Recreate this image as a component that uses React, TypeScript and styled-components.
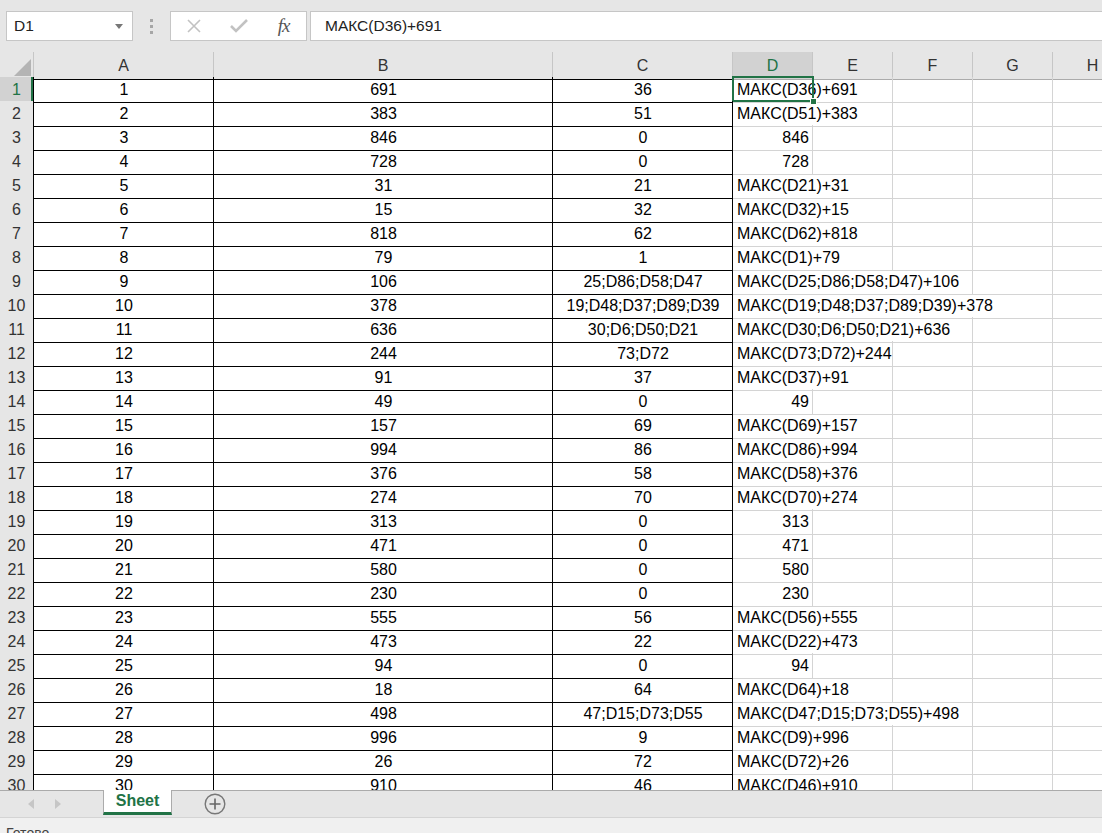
import React from 'react';
import styled, { createGlobalStyle } from 'styled-components';

const GREEN = '#217346';
const GRID = '34px 180px 339px 180px repeat(5, 80px)';

const GlobalStyle = createGlobalStyle`
  html, body {
    margin: 0;
    padding: 0;
    background: #e6e6e6;
  }
  body {
    font-family: "Liberation Sans", Arial, sans-serif;
  }
  * {
    box-sizing: border-box;
  }
`;

const Window = styled.div`
  height: 833px;
  display: flex;
  flex-direction: column;
  overflow: hidden;
  background: #e6e6e6;
`;

/* ---------- formula bar ---------- */

const FormulaBar = styled.div`
  height: 52px;
  flex: none;
  display: flex;
  align-items: flex-start;
  padding: 11px 0 0 6px;
`;

const NameBox = styled.div`
  width: 127px;
  height: 30px;
  background: #fff;
  border: 1px solid #c6c6c6;
  display: flex;
  align-items: center;
  justify-content: space-between;
  padding: 0 9px 0 7px;
  font-size: 15.5px;
  color: #222;
`;

const Grip = styled.div`
  width: 37px;
  height: 30px;
  display: flex;
  flex-direction: column;
  align-items: center;
  justify-content: center;
  gap: 3px;

  span {
    width: 3px;
    height: 3px;
    background: #a6a6a6;
  }
`;

const ButtonBox = styled.div`
  width: 137px;
  height: 30px;
  background: #fff;
  border: 1px solid #c6c6c6;
  display: grid;
  grid-template-columns: repeat(3, 45px);
  align-items: center;
  justify-items: center;
`;

const Fx = styled.span`
  font-family: "Liberation Serif", "Times New Roman", serif;
  font-style: italic;
  font-size: 19px;
  color: #555;
  letter-spacing: -1px;
`;

const FormulaInput = styled.div`
  flex: 1;
  height: 30px;
  margin: 0 -2px 0 3px;
  background: #fff;
  border: 1px solid #c6c6c6;
  display: flex;
  align-items: center;
  padding-left: 14px;
  font-size: 15.5px;
  color: #222;
`;

/* ---------- sheet grid ---------- */

const Sheet = styled.div`
  flex: 1;
  min-height: 0;
  overflow: hidden;
  background: #fff;
`;

const Row = styled.div<{ $height: number }>`
  display: grid;
  grid-template-columns: ${GRID};
  width: 1133px;
  height: ${(p) => p.$height}px;
`;

const Corner = styled.div`
  background: #e6e6e6;
  border-right: 1px solid #c6c6c6;
  border-bottom: 1px solid #ababab;
  display: flex;
  align-items: flex-end;
  justify-content: flex-end;
  padding: 0 2px 3px 0;
`;

const ColHead = styled.div<{ $active?: boolean; $edge?: string }>`
  background: ${(p) => (p.$active ? '#d2d2d2' : '#e6e6e6')};
  color: ${(p) => (p.$active ? GREEN : '#333')};
  border-right: 1px solid #c6c6c6;
  border-bottom: 1px solid ${(p) => p.$edge ?? '#ababab'};
  font-size: 16px;
  line-height: 27px;
  text-align: center;
`;

const RowHead = styled.div<{ $active?: boolean }>`
  background: ${(p) => (p.$active ? '#d2d2d2' : '#e6e6e6')};
  color: ${(p) => (p.$active ? GREEN : '#333')};
  border-right: 1px solid #000;
  border-bottom: 1px solid #d0d0d0;
  box-shadow: ${(p) => (p.$active ? `inset -2px 0 0 ${GREEN}` : 'none')};
  font-size: 16px;
  line-height: 25px;
  text-align: center;
`;

const Cell = styled.div<{
  $align: 'left' | 'center' | 'right';
  $ruled?: boolean;
  $span?: number;
}>`
  position: relative;
  grid-column: span ${(p) => p.$span ?? 1};
  border-right: 1px solid ${(p) => (p.$ruled ? '#000' : '#d4d4d4')};
  border-bottom: 1px solid ${(p) => (p.$ruled ? '#000' : '#d4d4d4')};
  padding: 0 3px 0 4px;
  text-align: ${(p) => p.$align};
  white-space: nowrap;
  font-size: 16px;
  line-height: 25px;
  color: #000;
`;

const Selection = styled.div`
  position: absolute;
  left: -1px;
  top: -1px;
  width: 82px;
  height: 26px;
  border: 2px solid ${GREEN};
  pointer-events: none;
`;

const Handle = styled.div`
  position: absolute;
  right: -5px;
  bottom: -5px;
  width: 7px;
  height: 7px;
  background: ${GREEN};
  border: 1px solid #fff;
`;

/* ---------- tabs & status ---------- */

const TabBar = styled.div`
  height: 27px;
  flex: none;
  display: flex;
  align-items: flex-start;
  background: #e6e6e6;
  border-top: 1px solid #ababab;
`;

const Nav = styled.div`
  width: 103px;
  height: 26px;
  display: flex;
  align-items: center;
  gap: 21px;
  padding-left: 28px;
`;

const Tab = styled.div`
  width: 69px;
  height: 25px;
  margin-top: -1px;
  background: #fff;
  border-left: 1px solid #ababab;
  border-right: 1px solid #ababab;
  border-bottom: 3px solid ${GREEN};
  color: ${GREEN};
  font-weight: bold;
  font-size: 16px;
  line-height: 22px;
  text-align: center;
`;

const AddSheet = styled.div`
  margin-left: 32px;
  height: 26px;
  display: flex;
  align-items: center;
`;

const StatusBar = styled.div`
  height: 16px;
  flex: none;
  overflow: hidden;
  background: #f0f0f0;
  border-top: 1px solid #d4d4d4;
  padding: 7px 0 0 6px;
  font-size: 14px;
  line-height: 16px;
  color: #444;
`;

type Value = number | string;
const rows: [number, number, Value, Value][] = [
  [1, 691, 36, 'МАКС(D36)+691'],
  [2, 383, 51, 'МАКС(D51)+383'],
  [3, 846, 0, 846],
  [4, 728, 0, 728],
  [5, 31, 21, 'МАКС(D21)+31'],
  [6, 15, 32, 'МАКС(D32)+15'],
  [7, 818, 62, 'МАКС(D62)+818'],
  [8, 79, 1, 'МАКС(D1)+79'],
  [9, 106, '25;D86;D58;D47', 'МАКС(D25;D86;D58;D47)+106'],
  [10, 378, '19;D48;D37;D89;D39', 'МАКС(D19;D48;D37;D89;D39)+378'],
  [11, 636, '30;D6;D50;D21', 'МАКС(D30;D6;D50;D21)+636'],
  [12, 244, '73;D72', 'МАКС(D73;D72)+244'],
  [13, 91, 37, 'МАКС(D37)+91'],
  [14, 49, 0, 49],
  [15, 157, 69, 'МАКС(D69)+157'],
  [16, 994, 86, 'МАКС(D86)+994'],
  [17, 376, 58, 'МАКС(D58)+376'],
  [18, 274, 70, 'МАКС(D70)+274'],
  [19, 313, 0, 313],
  [20, 471, 0, 471],
  [21, 580, 0, 580],
  [22, 230, 0, 230],
  [23, 555, 56, 'МАКС(D56)+555'],
  [24, 473, 22, 'МАКС(D22)+473'],
  [25, 94, 0, 94],
  [26, 18, 64, 'МАКС(D64)+18'],
  [27, 498, '47;D15;D73;D55', 'МАКС(D47;D15;D73;D55)+498'],
  [28, 996, 9, 'МАКС(D9)+996'],
  [29, 26, 72, 'МАКС(D72)+26'],
  [30, 910, 46, 'МАКС(D46)+910'],
];

const LETTERS = ['A', 'B', 'C', 'D', 'E', 'F', 'G', 'H'];

// how many 80px columns a left-aligned text spills over
const spanFor = (v: Value) =>
  typeof v === 'number' ? 1 : Math.min(5, Math.ceil((v.length * 8.8 + 8) / 80));

const App = () => (
  <Window>
    <GlobalStyle />
    <FormulaBar>
      <NameBox>
        D1
        <svg width="8" height="5" viewBox="0 0 8 5">
          <path d="M0 0h8L4 5z" fill="#777" />
        </svg>
      </NameBox>
      <Grip>
        <span />
        <span />
        <span />
      </Grip>
      <ButtonBox>
        <svg width="14" height="14" viewBox="0 0 14 14">
          <path d="M1 1l12 12M13 1L1 13" stroke="#c2c2c2" strokeWidth="1.6" />
        </svg>
        <svg width="18" height="14" viewBox="0 0 18 14">
          <path d="M1 7l5 5L17 1" stroke="#c2c2c2" strokeWidth="2.6" fill="none" />
        </svg>
        <Fx>fx</Fx>
      </ButtonBox>
      <FormulaInput>МАКС(D36)+691</FormulaInput>
    </FormulaBar>

    <Sheet>
      <Row $height={25}>
        <Corner>
          <svg width="17" height="17" viewBox="0 0 17 17">
            <path d="M17 0V17H0z" fill="#b4b4b4" />
          </svg>
        </Corner>
        {LETTERS.map((l, i) => (
          <ColHead key={l} $active={l === 'D'} $edge={i < 3 ? '#000' : undefined}>
            {l}
          </ColHead>
        ))}
      </Row>
      {rows.map(([a, b, c, d]) => {
        const span = spanFor(d);
        return (
          <Row key={a} $height={24}>
            <RowHead $active={a === 1}>{a}</RowHead>
            <Cell $align="center" $ruled>{a}</Cell>
            <Cell $align="center" $ruled>{b}</Cell>
            <Cell $align="center" $ruled>{c}</Cell>
            <Cell $align={typeof d === 'number' ? 'right' : 'left'} $span={span}>
              {d}
              {a === 1 && (
                <Selection>
                  <Handle />
                </Selection>
              )}
            </Cell>
            {Array.from({ length: 5 - span }).map((_, i) => (
              <Cell key={i} $align="left" />
            ))}
          </Row>
        );
      })}
    </Sheet>

    <TabBar>
      <Nav>
        <svg width="6" height="10" viewBox="0 0 6 10">
          <path d="M6 0v10L0 5z" fill="#c6c6c6" />
        </svg>
        <svg width="6" height="10" viewBox="0 0 6 10">
          <path d="M0 0v10l6-5z" fill="#c6c6c6" />
        </svg>
      </Nav>
      <Tab>Sheet</Tab>
      <AddSheet>
        <svg width="22" height="22" viewBox="0 0 22 22">
          <circle cx="11" cy="11" r="9.8" fill="none" stroke="#777" strokeWidth="1.4" />
          <path d="M11 5.5v11M5.5 11h11" stroke="#666" strokeWidth="1.6" />
        </svg>
      </AddSheet>
    </TabBar>
    <StatusBar>Готово</StatusBar>
  </Window>
);

export default App;
